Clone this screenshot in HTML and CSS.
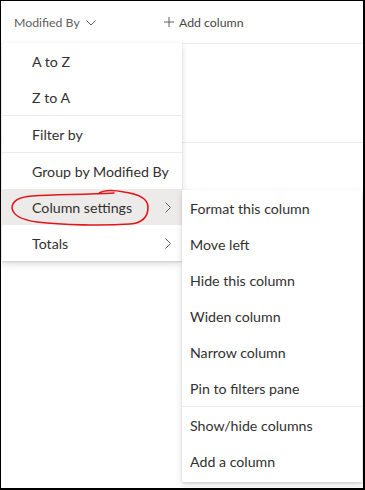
FILE: index.html
```html
<!DOCTYPE html>
<html>
<head>
<meta charset="utf-8">
<link rel="stylesheet" href="styles.css">
</head>
<body>
<div class="frame">
  <div class="header">
    <div class="col-head">Modified By
      <svg class="caret" width="10" height="6" viewBox="0 0 10 6"><path d="M0.5 0.5 L5 5 L9.5 0.5" fill="none" stroke="#605e5c" stroke-width="1"/></svg>
    </div>
    <div class="add-col">
      <svg class="plus" width="10" height="10" viewBox="0 0 10 10"><path d="M5 0 V10 M0 5 H10" stroke="#605e5c" stroke-width="1"/></svg>
      Add column
    </div>
  </div>
  <div class="row"></div>

  <div class="menu main">
    <div class="item">A to Z</div>
    <div class="item">Z to A</div>
    <div class="divider"></div>
    <div class="item">Filter by</div>
    <div class="divider"></div>
    <div class="item">Group by Modified By</div>
    <div class="item active">Column settings
      <svg class="chev" width="6" height="11" viewBox="0 0 6 11"><path d="M0.5 0.5 L5.5 5.5 L0.5 10.5" fill="none" stroke="#605e5c" stroke-width="1"/></svg>
    </div>
    <div class="item">Totals
      <svg class="chev" width="6" height="11" viewBox="0 0 6 11"><path d="M0.5 0.5 L5.5 5.5 L0.5 10.5" fill="none" stroke="#605e5c" stroke-width="1"/></svg>
    </div>
  </div>

  <div class="menu sub">
    <div class="item">Format this column</div>
    <div class="item">Move left</div>
    <div class="item">Hide this column</div>
    <div class="item">Widen column</div>
    <div class="item">Narrow column</div>
    <div class="item">Pin to filters pane</div>
    <div class="divider"></div>
    <div class="item">Show/hide columns</div>
    <div class="item">Add a column</div>
  </div>

  <svg class="scribble" width="150" height="45" viewBox="0 0 150 45">
    <path d="M96 7 C102 2, 112 3, 122 5 C136 7, 146 11, 146 20 C146 30, 141 36, 128 37 C100 39, 60 38, 35 35 C20 33, 11 28, 10 21 C10 13, 18 10, 30 9 C55 7, 80 8, 112 6" fill="none" stroke="#e0161b" stroke-width="1.6" stroke-linecap="round"/>
  </svg>
</div>
</body>
</html>
```

FILE: styles.css
```css
html, body {
  margin: 0;
  padding: 0;
  background: #fff;
}
.frame {
  position: relative;
  width: 365px;
  height: 490px;
  box-sizing: border-box;
  border: 1px solid #000;
  border-right-width: 2px;
  border-bottom-width: 2px;
  overflow: hidden;
  font-family: "Segoe UI", "Lato", "Noto Sans", sans-serif;
  color: #323130;
  white-space: nowrap;
}
.header {
  height: 42px;
  border-bottom: 1px solid #edebe9;
  display: flex;
  align-items: center;
  font-size: 12.3px;
  color: #605e5c;
}
.col-head {
  padding-left: 13px;
  width: 150px;
  display: flex;
  align-items: center;
  gap: 6px;
}
.caret { margin-top: 1px; }
.add-col {
  display: flex;
  align-items: center;
  gap: 5px;
  color: #484644;
}
.row {
  height: 98px;
  border-bottom: 1px solid #edebe9;
}
.menu {
  position: absolute;
  width: 180px;
  background: #fff;
  box-shadow: 0 3.2px 7.2px rgba(0,0,0,0.132), 0 0.6px 1.8px rgba(0,0,0,0.108);
  font-size: 14.2px;
}
.menu.main {
  left: 1px;
  top: 42px;
}
.menu.sub {
  left: 181px;
  top: 189px;
  padding-bottom: 3px;
}
.item {
  height: 36px;
  display: flex;
  align-items: center;
  justify-content: space-between;
}
.main .item { padding: 0 11px 0 30px; }
.sub .item { padding: 0 8px; }
.item.active { background: #edebe9; }
.divider {
  height: 1px;
  background: #edebe9;
}
.scribble {
  position: absolute;
  left: 1px;
  top: 186px;
}
```
